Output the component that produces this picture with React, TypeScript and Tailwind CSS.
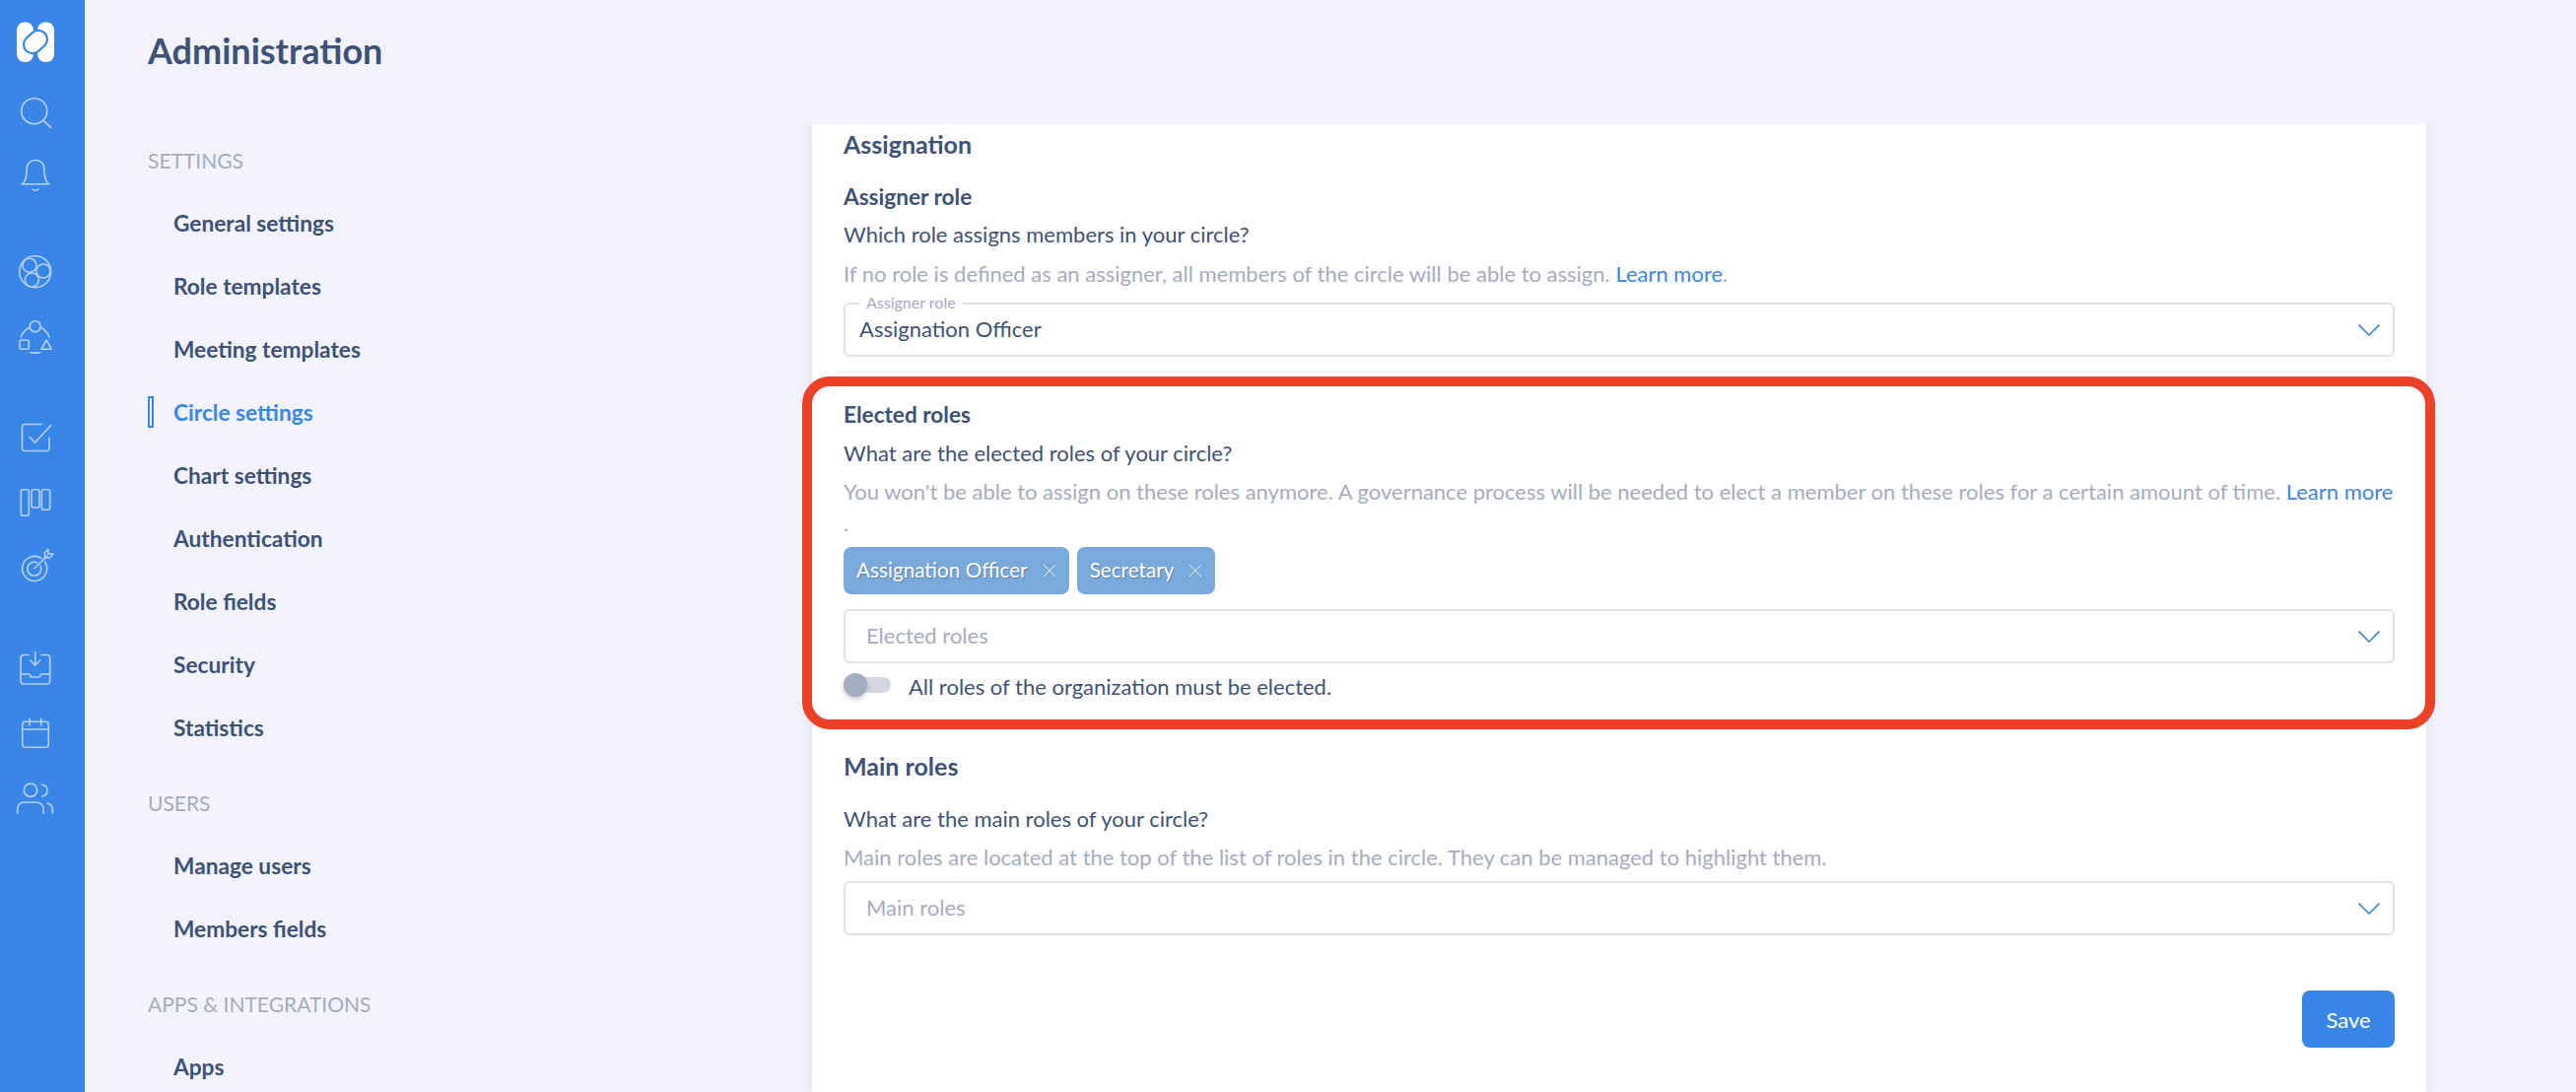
import React from "react";

const navGroups = [
  {
    title: "SETTINGS",
    items: [
      "General settings",
      "Role templates",
      "Meeting templates",
      "Circle settings",
      "Chart settings",
      "Authentication",
      "Role fields",
      "Security",
      "Statistics",
    ],
  },
  { title: "USERS", items: ["Manage users", "Members fields"] },
  { title: "APPS & INTEGRATIONS", items: ["Apps"] },
];

const Icon: React.FC<{ className?: string; children: React.ReactNode }> = ({
  className,
  children,
}) => (
  <svg
    viewBox="0 0 48 48"
    fill="none"
    stroke="#b5d1f6"
    strokeWidth="1.6"
    strokeLinecap="round"
    strokeLinejoin="round"
    className={`w-12 h-12 shrink-0 ${className ?? ""}`}
  >
    {children}
  </svg>
);

const Sidebar = () => (
  <aside className="w-[86px] h-full shrink-0 bg-[#3a86e8] flex flex-col items-start pl-[12px] pt-[19px]">
    <svg viewBox="0 0 48 48" className="w-12 h-12 shrink-0">
      <rect x="5" y="3.5" width="17" height="40.5" rx="8" fill="#ffffff" />
      <rect x="26" y="3.5" width="17" height="40.5" rx="8" fill="#ffffff" />
      <rect
        x="11"
        y="14.5"
        width="26"
        height="18"
        rx="9"
        transform="rotate(-42 24 23.5)"
        fill="#ffffff"
        stroke="#3a86e8"
        strokeWidth="2.2"
      />
    </svg>
    <Icon className="mt-[23px]">
      <circle cx="22.7" cy="22.7" r="13" />
      <path d="M32.3 32.7 L39.7 39.3" />
    </Icon>
    <Icon className="mt-[17px]">
      <path d="M10 31.7 H38" />
      <path d="M11.5 31 C15 27 15 22 15 17 C15 11 19 7.5 24 7.5 C29 7.5 33 11 33 17 C33 22 33 27 36.5 31" />
      <path d="M21 37 Q24 39.5 27 37" />
    </Icon>
    <Icon className="mt-[49px]">
      <circle cx="23.7" cy="23.7" r="16" />
      <circle cx="18" cy="17.3" r="7" />
      <circle cx="32" cy="23" r="7" />
      <circle cx="20.3" cy="32" r="7" />
    </Icon>
    <Icon className="mt-[18px]">
      <circle cx="23.7" cy="13.3" r="5.5" />
      <rect x="8" y="27" width="9.3" height="9.3" rx="1.5" />
      <path d="M35 27 L30 36.3 H40.3 Z" />
      <path d="M9.3 24.3 Q11 18 17.3 14.7" />
      <path d="M30.3 14.7 Q36 18 38 24.3" />
      <path d="M18.7 39.7 Q24 40.5 28.7 39.7" />
    </Icon>
    <Icon className="mt-[53px]">
      <path d="M30 11.5 H13.5 a3 3 0 0 0 -3 3 V35.5 a3 3 0 0 0 3 3 H35 a3 3 0 0 0 3 -3 V25" />
      <path d="M18 24.5 L23.7 30 L39.7 12.5" />
    </Icon>
    <Icon className="mt-[19px]">
      <rect x="9.3" y="10.7" width="8" height="26.6" rx="2" />
      <rect x="20" y="10.7" width="8" height="18.3" rx="2" />
      <rect x="30.3" y="10.7" width="8.4" height="20.6" rx="2" />
    </Icon>
    <Icon className="mt-[16px]">
      <path d="M30 16.5 A12.5 12.5 0 1 0 33.5 20" />
      <path d="M26 21 A7 7 0 1 0 29 24" />
      <path d="M23 26.7 L36 14" />
      <path d="M33.5 16.5 V10.5 L37 7.5 V12 H42 L38.5 16 H33.5" />
    </Icon>
    <Icon className="mt-[56px]">
      <path d="M17 10.5 H12 a3 3 0 0 0 -3 3 V37 a3 3 0 0 0 3 3 H35.7 a3 3 0 0 0 3 -3 V13.5 a3 3 0 0 0 -3 -3 H30" />
      <path d="M9 30 H18 L19.5 33 H28 L29.5 30 H38.7" />
      <path d="M23.7 7.7 V21 M18.7 16 L23.7 21 L28.7 16" />
    </Icon>
    <Icon className="mt-[18px]">
      <rect x="10.7" y="12.3" width="26.6" height="26" rx="3" />
      <path d="M10.7 20 H37.3 M18 9.3 V16 M29.7 9.3 V16" />
    </Icon>
    <Icon className="mt-[18px]">
      <circle cx="19" cy="15.7" r="6.7" />
      <path d="M30.7 10 Q36 11 36 16 Q36 21 30.7 22" />
      <path d="M5.7 39 V36 Q5.7 28 13 28 H24 Q32.3 28 32.3 36 V39" />
      <path d="M36 29 Q41.3 30 41.3 36 V39" />
    </Icon>
  </aside>
);

const Chevron = () => (
  <svg
    viewBox="0 0 22 12"
    fill="none"
    stroke="#3a86e8"
    strokeWidth="1.6"
    className="w-[22px] h-[12px] shrink-0"
  >
    <path d="M0.5 0.5 L11 11 L21.5 0.5" />
  </svg>
);

const SelectBox: React.FC<{
  value?: string;
  placeholder?: string;
  legend?: string;
  className?: string;
}> = ({ value, placeholder, legend, className }) => (
  <div
    className={`relative h-[55px] border-2 border-[#dfe2e9] rounded-[6px] flex items-center justify-between pr-[13px] ${
      value ? "pl-[14px]" : "pl-[21px]"
    } ${className ?? ""}`}
  >
    {legend && (
      <span className="absolute -top-[12px] left-[14px] px-[7px] bg-white text-[16px] leading-[20px] text-[#a3adc2]">
        {legend}
      </span>
    )}
    <span
      className={`-mt-[2px] ${value ? "text-[#3e5278]" : "text-[#a3adc2]"}`}
    >
      {value ?? placeholder}
    </span>
    <Chevron />
  </div>
);

const Chip: React.FC<{ label: string }> = ({ label }) => (
  <div className="h-[48px] rounded-[8px] bg-[#7aa9dc] flex items-center px-[13px] gap-[15px] text-[20.7px] text-white [text-shadow:1px_1px_1px_rgba(50,80,120,0.45)]">
    <span>{label}</span>
    <svg
      viewBox="0 0 14 14"
      fill="none"
      stroke="#e4eefa"
      strokeWidth="1"
      className="w-[14px] h-[14px] shrink-0"
    >
      <path d="M1 1 L13 13 M13 1 L1 13" />
    </svg>
  </div>
);

export default function App() {
  return (
    <div className="h-screen w-full flex overflow-hidden bg-[#f2f3fc] font-['Lato',sans-serif] text-[22px] text-[#3e5278]">
      <Sidebar />
      <main className="flex-1 flex flex-col min-w-0">
        <div className="h-[126px] shrink-0 pl-[64px] pb-[24px] flex items-center">
          <h1 className="text-[36px] font-bold leading-none">Administration</h1>
        </div>
        <div className="flex-1 flex min-h-0">
          <nav className="w-[708px] shrink-0 pl-[64px] pt-[4px] overflow-hidden">
            {navGroups.map((group, i) => (
              <div key={group.title} className={i > 0 ? "mt-[12px]" : ""}>
                <div className="h-16 flex items-center pt-[2px] text-[21px] text-[#a3adc2]">
                  {group.title}
                </div>
                {group.items.map((item) => {
                  const active = item === "Circle settings";
                  return (
                    <div key={item} className="h-16 flex items-center">
                      <span
                        className={`w-[6px] h-[32px] mr-[20px] shrink-0 ${
                          active ? "border-2 border-[#3a86e8]" : ""
                        }`}
                      />
                      <span
                        className={`mt-[2px] font-bold text-[22.7px] ${
                          active ? "text-[#3a86e8]" : "text-[#3e5278]"
                        }`}
                      >
                        {item}
                      </span>
                    </div>
                  );
                })}
              </div>
            ))}
          </nav>
          <div className="w-[1698px] shrink-0 px-[30px] overflow-hidden">
            <div className="h-full bg-white shadow-[0_0_14px_rgba(70,80,120,0.12)] px-[32px]">
              <h2 className="h-[42px] flex items-center text-[25px] font-bold">
                Assignation
              </h2>
              <div className="mt-[16px] h-[32px] leading-[32px] text-[22.6px] font-bold">
                Assigner role
              </div>
              <div className="mt-[6px] h-[32px] leading-[32px]">
                Which role assigns members in your circle?
              </div>
              <p className="mt-[8px] leading-[32px] text-[#a3adc2]">
                If no role is defined as an assigner, all members of the circle
                will be able to assign.{" "}
                <span className="text-[#3a86e8]">Learn more</span>.
              </p>
              <SelectBox
                legend="Assigner role"
                value="Assignation Officer"
                className="mt-[13px]"
              />

              <div className="relative mt-[20px] h-[358px] pt-[23px]">
                <div className="absolute top-0 -left-[42px] -right-[41px] bottom-0 border-[10px] border-[#ec4027] rounded-[28px] pointer-events-none" />
                <div className="h-[32px] leading-[32px] text-[22.6px] font-bold">
                  Elected roles
                </div>
                <div className="mt-[7px] h-[32px] leading-[32px]">
                  What are the elected roles of your circle?
                </div>
                <p className="mt-[7px] leading-[32px] text-[#a3adc2]">
                  You won't be able to assign on these roles anymore. A
                  governance process will be needed to elect a member on these
                  roles for a certain amount of time.{" "}
                  <span className="text-[#3a86e8]">Learn more</span>
                  <br />.
                </p>
                <div className="mt-[8px] flex gap-[8px]">
                  <Chip label="Assignation Officer" />
                  <Chip label="Secretary" />
                </div>
                <SelectBox placeholder="Elected roles" className="mt-[15px]" />
                <div className="mt-[10px] flex items-center">
                  <div className="relative w-[48px] h-[16px] -mt-[4px] rounded-full bg-[#d3d8e3] shrink-0">
                    <div className="absolute -top-[4px] left-0 w-[24px] h-[24px] rounded-full bg-[#a3adc2] shadow-[0_2px_5px_rgba(60,70,100,0.3)]" />
                  </div>
                  <span className="ml-[18px] leading-[28px]">
                    All roles of the organization must be elected.
                  </span>
                </div>
              </div>

              <h2 className="mt-[17px] h-[42px] flex items-center text-[25px] font-bold">
                Main roles
              </h2>
              <div className="mt-[16px] h-[32px] leading-[32px]">
                What are the main roles of your circle?
              </div>
              <p className="mt-[7px] leading-[32px] text-[#a3adc2]">
                Main roles are located at the top of the list of roles in the
                circle. They can be managed to highlight them.
              </p>
              <SelectBox placeholder="Main roles" className="mt-[8px]" />
              <div className="mt-[56px] flex justify-end">
                <button className="w-[94px] h-[58px] rounded-[8px] bg-[#3a86e8] text-white">
                  Save
                </button>
              </div>
            </div>
          </div>
        </div>
      </main>
    </div>
  );
}
